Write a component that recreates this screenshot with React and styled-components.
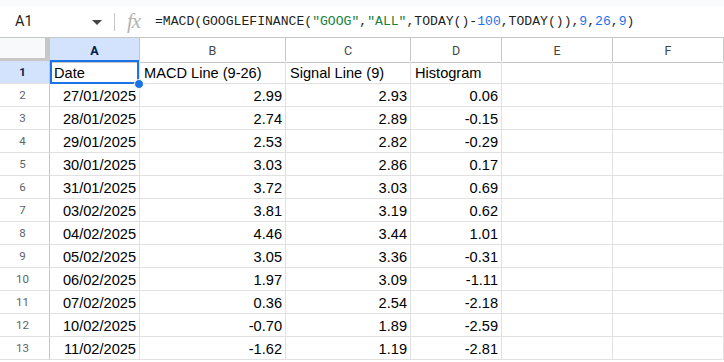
import React from "react";
import styled, { createGlobalStyle } from "styled-components";

const Global = createGlobalStyle`
  html, body { margin: 0; padding: 0; background: #fff; overflow: hidden; }
  body { font-family: "Liberation Sans", Arial, sans-serif; }
`;

const Page = styled.div`
  width: 724px;
  height: 362px;
  overflow: hidden;
  display: flex;
  flex-direction: column;
`;

const TopStrip = styled.div`
  height: 6px;
  background: #f9fbfd;
`;

const FormulaBar = styled.div`
  height: 31px;
  display: flex;
  align-items: center;
  background: #fff;
`;

const NameBox = styled.div`
  width: 114px;
  box-sizing: border-box;
  padding: 0 12px 0 15px;
  display: flex;
  align-items: center;
  justify-content: space-between;
  font-family: Roboto, "Liberation Sans", sans-serif;
  font-size: 14.5px;
  color: #1f1f1f;
`;

const Caret = styled.span`
  width: 0;
  height: 0;
  border-left: 5px solid transparent;
  border-right: 5px solid transparent;
  border-top: 5px solid #444746;
  margin-top: 1px;
`;

const Divider = styled.div`
  width: 1px;
  height: 18px;
  background: #c4c7c5;
`;

const Fx = styled.span`
  width: 40px;
  padding-left: 12px;
  box-sizing: border-box;
  font-family: "Liberation Serif", serif;
  font-style: italic;
  font-size: 21px;
  line-height: 1;
  color: #b4b4b4;
  letter-spacing: -1px;
`;

const Formula = styled.div`
  font-family: "Liberation Mono", "DejaVu Sans Mono", monospace;
  font-size: 13.1px;
  color: #1f1f1f;
  white-space: pre;
`;

const Tok = styled.span`
  color: ${(p) => (p.$kind === "str" ? "#188038" : p.$kind === "num" ? "#1a73e8" : "#1f1f1f")};
`;

const Grid = styled.div`
  display: grid;
  grid-template-columns: 50px 90px 146px 125px 91px 111px 111px;
  grid-auto-rows: 23px;
  border-top: 1px solid #c4c7c5;
  position: relative;
`;

const Corner = styled.div`
  height: 25px;
  box-sizing: border-box;
  background: #f8f9fa;
  border-right: 5px solid #c7c7c7;
  border-bottom: 5px solid #c7c7c7;
`;

const ColHead = styled.div`
  height: 25px;
  box-sizing: border-box;
  display: flex;
  align-items: center;
  justify-content: center;
  font-family: Roboto, "Liberation Sans", sans-serif;
  font-size: 12.5px;
  background: ${(p) => (p.$active ? "#d3e3fd" : "#fff")};
  color: ${(p) => (p.$active ? "#041e49" : "#444746")};
  font-weight: ${(p) => (p.$active ? 700 : 400)};
  border-right: 1px solid #c4c7c5;
  border-bottom: 1px solid #c4c7c5;
`;

const RowHead = styled.div`
  box-sizing: border-box;
  display: flex;
  align-items: center;
  justify-content: center;
  padding-right: 4px;
  font-family: Roboto, "Liberation Sans", sans-serif;
  font-size: 11.5px;
  background: ${(p) => (p.$active ? "#d3e3fd" : "#fff")};
  color: ${(p) => (p.$active ? "#041e49" : "#5f6368")};
  font-weight: ${(p) => (p.$active ? 700 : 400)};
  border-right: 1px solid #c4c7c5;
  border-bottom: 1px solid #e1e1e1;
`;

const Cell = styled.div`
  position: relative;
  box-sizing: border-box;
  display: flex;
  align-items: center;
  justify-content: ${(p) => (p.$right ? "flex-end" : "flex-start")};
  padding: 1px 3px 0 4px;
  font-family: "Liberation Sans", Arial, sans-serif;
  font-size: 14.6px;
  color: #000;
  white-space: nowrap;
  border-right: 1px solid #e1e1e1;
  border-bottom: 1px solid #e1e1e1;
`;

const Selection = styled.div`
  position: absolute;
  left: 0;
  top: -1px;
  right: 0;
  bottom: -1px;
  border: 2px solid #1a73e8;
  pointer-events: none;
`;

const Handle = styled.div`
  position: absolute;
  right: -5px;
  bottom: -6px;
  width: 8px;
  height: 8px;
  border-radius: 50%;
  background: #1a73e8;
  border: 1px solid #fff;
  z-index: 2;
`;

const formula = [
  ["=MACD(GOOGLEFINANCE(", "t"],
  ['"GOOG"', "str"],
  [",", "t"],
  ['"ALL"', "str"],
  [",TODAY()-", "t"],
  ["100", "num"],
  [",TODAY()),", "t"],
  ["9", "num"],
  [",", "t"],
  ["26", "num"],
  [",", "t"],
  ["9", "num"],
  [")", "t"],
];

const cols = ["A", "B", "C", "D", "E", "F"];

const data = [
  ["27/01/2025", "2.99", "2.93", "0.06"],
  ["28/01/2025", "2.74", "2.89", "-0.15"],
  ["29/01/2025", "2.53", "2.82", "-0.29"],
  ["30/01/2025", "3.03", "2.86", "0.17"],
  ["31/01/2025", "3.72", "3.03", "0.69"],
  ["03/02/2025", "3.81", "3.19", "0.62"],
  ["04/02/2025", "4.46", "3.44", "1.01"],
  ["05/02/2025", "3.05", "3.36", "-0.31"],
  ["06/02/2025", "1.97", "3.09", "-1.11"],
  ["07/02/2025", "0.36", "2.54", "-2.18"],
  ["10/02/2025", "-0.70", "1.89", "-2.59"],
  ["11/02/2025", "-1.62", "1.19", "-2.81"],
];

export default function App() {
  return (
    <Page>
      <Global />
      <TopStrip />
      <FormulaBar>
        <NameBox>
          <span>A1</span>
          <Caret />
        </NameBox>
        <Divider />
        <Fx>fx</Fx>
        <Formula>
          {formula.map(([t, k], i) => (
            <Tok key={i} $kind={k}>
              {t}
            </Tok>
          ))}
        </Formula>
      </FormulaBar>
      <Grid>
        <Corner />
        {cols.map((c) => (
          <ColHead key={c} $active={c === "A"}>
            {c}
          </ColHead>
        ))}
        <RowHead $active>1</RowHead>
        <Cell>
          Date
          <Selection />
          <Handle />
        </Cell>
        <Cell>MACD Line (9-26)</Cell>
        <Cell>Signal Line (9)</Cell>
        <Cell>Histogram</Cell>
        <Cell />
        <Cell />
        {data.map((row, r) => (
          <React.Fragment key={r}>
            <RowHead>{r + 2}</RowHead>
            {row.map((v, i) => (
              <Cell key={i} $right>
                {v}
              </Cell>
            ))}
            <Cell />
            <Cell />
          </React.Fragment>
        ))}
      </Grid>
    </Page>
  );
}
